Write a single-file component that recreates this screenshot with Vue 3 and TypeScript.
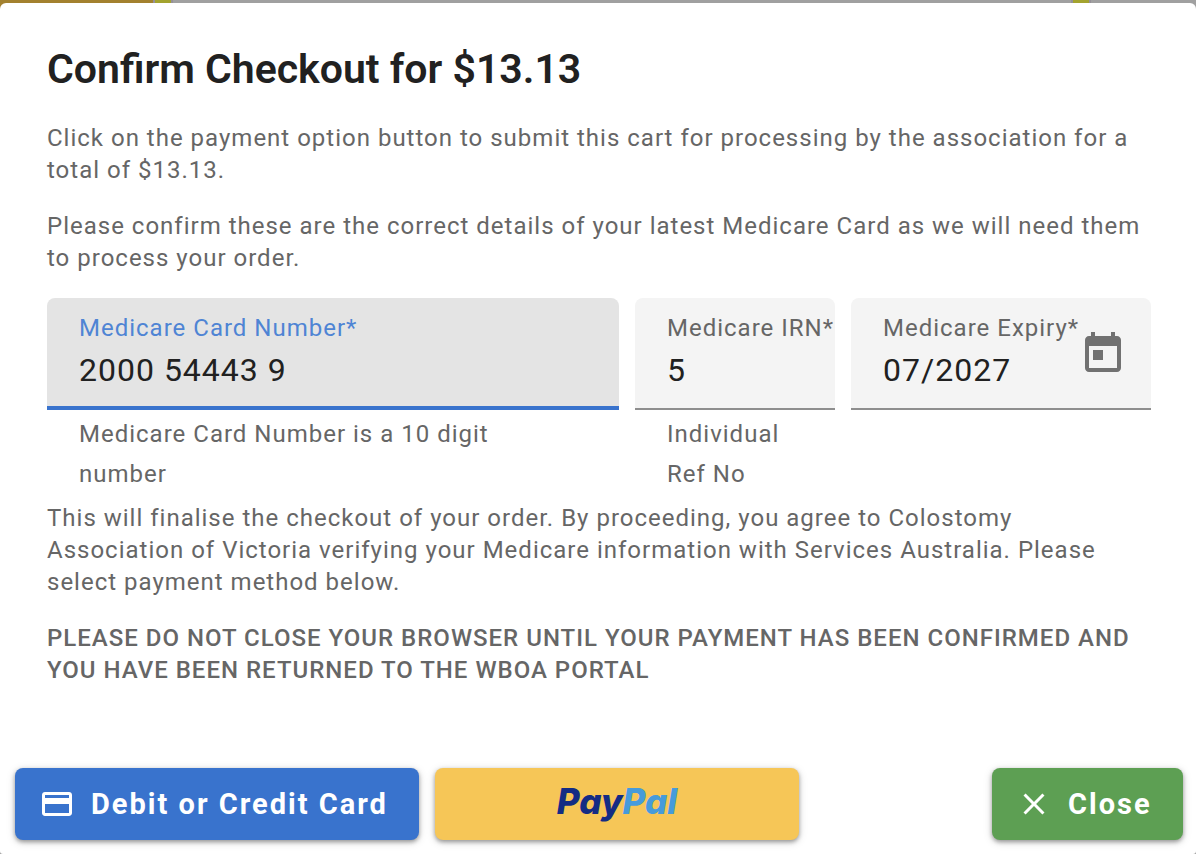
<script setup lang="ts">
import { ref } from 'vue'

const total = '$13.13'
const cardNumber = ref('2000 54443 9')
const irn = ref('5')
const expiry = ref('07/2027')
</script>

<template>
  <div class="page">
    <div class="backdrop" aria-hidden="true">
      <span class="brand"></span>
      <span class="mark"></span>
      <span class="bar"></span>
      <span class="mark"></span>
      <span class="tail"></span>
    </div>
    <main class="dialog" role="dialog" aria-labelledby="dialog-title">
      <div class="content">
        <h1 id="dialog-title">Confirm Checkout for {{ total }}</h1>
        <p>
          Click on the payment option button to submit this cart for processing by the association
          for a total of {{ total }}.
        </p>
        <p>
          Please confirm these are the correct details of your latest Medicare Card as we will need
          them to process your order.
        </p>
        <form class="fields" @submit.prevent>
          <div class="field number">
            <div class="box active">
              <label for="card-number">Medicare Card Number*</label>
              <input id="card-number" v-model="cardNumber" type="text" aria-describedby="number-hint" />
            </div>
            <div id="number-hint" class="hint">Medicare Card Number is a 10 digit number</div>
          </div>
          <div class="field irn">
            <div class="box">
              <label for="irn">Medicare IRN*</label>
              <input id="irn" v-model="irn" type="text" aria-describedby="irn-hint" />
            </div>
            <div id="irn-hint" class="hint">Individual Ref No</div>
          </div>
          <div class="field expiry">
            <div class="box">
              <label for="expiry">Medicare Expiry*</label>
              <input id="expiry" v-model="expiry" type="text" />
              <button class="calendar" type="button" aria-label="Choose expiry date">
                <svg viewBox="0 0 24 24" aria-hidden="true">
                  <path
                    d="M19 3h-1V1h-2v2H8V1H6v2H5c-1.11 0-1.99.9-1.99 2L3 19c0 1.1.89 2 2 2h14c1.1 0 2-.9 2-2V5c0-1.1-.9-2-2-2zm0 16H5V8h14v11zM7 10h5v5H7z"
                  />
                </svg>
              </button>
            </div>
          </div>
        </form>
        <p>
          This will finalise the checkout of your order. By proceeding, you agree to Colostomy
          Association of Victoria verifying your Medicare information with Services Australia.
          Please select payment method below.
        </p>
        <p class="warning">
          PLEASE DO NOT CLOSE YOUR BROWSER UNTIL YOUR PAYMENT HAS BEEN CONFIRMED AND YOU HAVE BEEN
          RETURNED TO THE WBOA PORTAL
        </p>
      </div>
      <div class="actions">
        <button class="action card" type="button">
          <svg viewBox="0 0 24 24" aria-hidden="true">
            <path
              d="M20 4H4c-1.11 0-1.99.89-1.99 2L2 18c0 1.11.89 2 2 2h16c1.11 0 2-.89 2-2V6c0-1.11-.89-2-2-2zm0 14H4v-6h16v6zm0-10H4V6h16v2z"
            />
          </svg>
          <span>Debit or Credit Card</span>
        </button>
        <button class="action paypal" type="button">
          <span class="pay">Pay</span><span class="pal">Pal</span>
        </button>
        <button class="action close" type="button">
          <svg viewBox="0 0 24 24" aria-hidden="true">
            <path
              d="M19 6.41 17.59 5 12 10.59 6.41 5 5 6.41 10.59 12 5 17.59 6.41 19 12 13.41 17.59 19 19 17.59 13.41 12z"
            />
          </svg>
          <span>Close</span>
        </button>
      </div>
    </main>
  </div>
</template>

<style>
body {
  margin: 0;
  background: #a0a0a0;
}
</style>

<style scoped>
.page {
  position: relative;
  box-sizing: border-box;
  min-height: 100vh;
  padding-top: 3px;
  display: flex;
  overflow: hidden;
  font-family: Roboto, 'Liberation Sans', sans-serif;
}
.backdrop {
  position: absolute;
  inset: 0 0 auto;
  height: 12px;
  display: flex;
}
.brand {
  width: 153px;
  background: #a3812f;
}
.mark {
  width: 16px;
  background: #a3a32f;
  border: solid #959098;
  border-width: 0 2px;
}
.bar {
  flex: 1;
  background: #a0a0a0;
}
.tail {
  width: 105px;
  background: #a0a0a0;
}
.dialog {
  position: relative;
  flex: 1;
  min-width: 0;
  display: flex;
  flex-direction: column;
  justify-content: space-between;
  background: #fff;
  border-radius: 6px 6px 3px 3px;
}
.content {
  padding: 38px 45px 0 47px;
}
h1 {
  margin: 0 0 25px;
  font-size: 41px;
  line-height: 56px;
  font-weight: 600;
  color: #212121;
}
p {
  margin: 0 0 24px;
  font-size: 24px;
  line-height: 32px;
  letter-spacing: 1px;
  color: #666;
}
.warning {
  font-weight: 500;
}
.fields {
  display: flex;
  gap: 16px;
  margin-bottom: 8px;
}
.field {
  min-width: 0;
}
.number {
  flex: 1;
}
.irn {
  width: 200px;
}
.expiry {
  width: 300px;
}
.box {
  position: relative;
  box-sizing: border-box;
  height: 112px;
  padding: 14px 0 0 32px;
  background: #f4f4f4;
  border-bottom: 2px solid #8e8e8e;
  border-radius: 8px 8px 0 0;
}
.box.active {
  background: #e4e4e4;
  border-bottom: 4px solid #3973cd;
}
label {
  display: block;
  font-size: 24px;
  line-height: 32px;
  letter-spacing: 1px;
  white-space: nowrap;
  color: #666;
}
.active label {
  color: #4f84d4;
}
input {
  display: block;
  box-sizing: border-box;
  width: 100%;
  height: 40px;
  margin-top: 6px;
  padding: 0;
  border: 0;
  outline: 0;
  background: none;
  font-family: inherit;
  font-size: 32px;
  letter-spacing: 1px;
  color: #212121;
}
.calendar {
  position: absolute;
  top: 32px;
  right: 24px;
  width: 48px;
  height: 48px;
  padding: 0;
  border: 0;
  background: none;
  color: #717171;
}
.calendar svg {
  display: block;
  width: 48px;
  height: 48px;
  fill: currentColor;
}
.hint {
  margin-top: 4px;
  padding: 0 56px 0 32px;
  font-size: 24px;
  line-height: 40px;
  letter-spacing: 1px;
  color: #666;
}
.actions {
  display: flex;
  gap: 16px;
  padding: 0 13px 14px 15px;
}
.action {
  display: flex;
  align-items: center;
  gap: 16px;
  height: 72px;
  padding: 0 24px;
  border: 0;
  border-radius: 8px;
  box-shadow: 0 2px 4px rgba(0, 0, 0, 0.35), 0 2px 10px rgba(0, 0, 0, 0.15);
  font-family: inherit;
  font-size: 29px;
  line-height: 32px;
  font-weight: 700;
  letter-spacing: 2px;
  white-space: nowrap;
  color: #fff;
}
.action svg {
  width: 36px;
  height: 36px;
  fill: currentColor;
}
.card {
  min-width: 404px;
  background: #3973cd;
}
.paypal {
  width: 364px;
  padding: 0 0 6px;
  gap: 0;
  justify-content: center;
  background: #f6c657;
  font-family: Inter, sans-serif;
  font-feature-settings: 'cv11';
  font-size: 35px;
  font-style: italic;
  font-weight: 800;
  letter-spacing: 0;
}
.pay {
  color: #142c84;
}
.pal {
  color: #469bdb;
}
.close {
  min-width: 191px;
  margin-left: auto;
  background: #5d9f53;
}
</style>
